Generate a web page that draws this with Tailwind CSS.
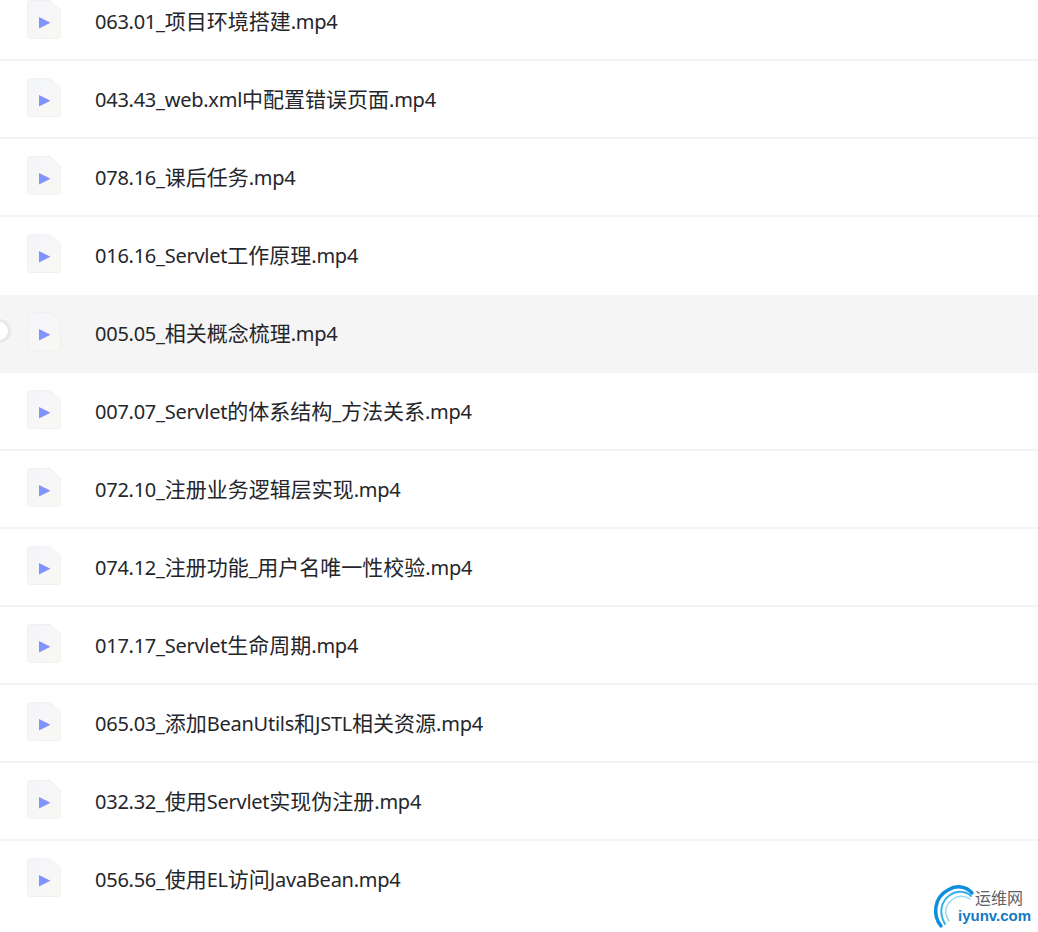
<!DOCTYPE html>
<html lang="zh"><head><meta charset="utf-8">
<script src="https://cdn.jsdelivr.net/npm/@tailwindcss/browser@4"></script>
</head>
<body class="bg-white">
<div class="relative h-[932px] w-[1038px] overflow-hidden bg-white text-[20px] tracking-[-0.25px] text-[#25262b] [font-family:'Noto_Sans','Noto_Sans_CJK_SC',sans-serif]">
<svg class="absolute h-0 w-0"><defs>
<linearGradient id="fg" x1="0" y1="0" x2="1" y2="1"><stop offset="0" stop-color="#f3f5fa"/><stop offset="1" stop-color="#faf8f3"/></linearGradient>
<symbol id="file" viewBox="0 0 34 39"><path d="M3.5 .5H23.5L33.5 10V35.5a3 3 0 0 1-3 3H3.5a3 3 0 0 1-3-3V3.5a3 3 0 0 1 3-3Z" fill="url(#fg)" stroke="#f1f1f1"/><path d="M12 17 23.5 22.8 12 28.5Z" fill="#8093ff"/></symbol>
</defs></svg>
<ul class="-mt-[17px]">
<li class="flex h-[78px] items-center border-b-2 border-[#f4f4f4] pl-[27px]"><svg class="mr-[34px] mb-[3px] h-[39px] w-[34px]"><use href="#file"/></svg><span class="pt-[2px]">063.01_<span class="text-[21px] tracking-normal">项目环境搭建</span>.mp4</span></li>
<li class="flex h-[78px] items-center border-b-2 border-[#f4f4f4] pl-[27px]"><svg class="mr-[34px] mb-[3px] h-[39px] w-[34px]"><use href="#file"/></svg><span class="pt-[2px]">043.43_web.xml<span class="text-[21px] tracking-normal">中配置错误页面</span>.mp4</span></li>
<li class="flex h-[78px] items-center border-b-2 border-[#f4f4f4] pl-[27px]"><svg class="mr-[34px] mb-[3px] h-[39px] w-[34px]"><use href="#file"/></svg><span class="pt-[2px]">078.16_<span class="text-[21px] tracking-normal">课后任务</span>.mp4</span></li>
<li class="flex h-[78px] items-center border-b-2 border-transparent pl-[27px]"><svg class="mr-[34px] mb-[3px] h-[39px] w-[34px]"><use href="#file"/></svg><span class="pt-[2px]">016.16_Servlet<span class="text-[21px] tracking-normal">工作原理</span>.mp4</span></li>
<li class="relative flex h-[78px] items-center border-b-2 border-transparent bg-[#f5f5f5] pl-[27px]"><span class="absolute -left-[13px] top-[24px] h-[24px] w-[24px] rounded-full border-[3px] border-[#e8e8e8] bg-white"></span><svg class="mr-[34px] mb-[3px] h-[39px] w-[34px]"><use href="#file"/></svg><span class="pt-[2px]">005.05_<span class="text-[21px] tracking-normal">相关概念梳理</span>.mp4</span></li>
<li class="flex h-[78px] items-center border-b-2 border-[#f4f4f4] pl-[27px]"><svg class="mr-[34px] mb-[3px] h-[39px] w-[34px]"><use href="#file"/></svg><span class="pt-[2px]">007.07_Servlet<span class="text-[21px] tracking-normal">的体系结构</span>_<span class="text-[21px] tracking-normal">方法关系</span>.mp4</span></li>
<li class="flex h-[78px] items-center border-b-2 border-[#f4f4f4] pl-[27px]"><svg class="mr-[34px] mb-[3px] h-[39px] w-[34px]"><use href="#file"/></svg><span class="pt-[2px]">072.10_<span class="text-[21px] tracking-normal">注册业务逻辑层实现</span>.mp4</span></li>
<li class="flex h-[78px] items-center border-b-2 border-[#f4f4f4] pl-[27px]"><svg class="mr-[34px] mb-[3px] h-[39px] w-[34px]"><use href="#file"/></svg><span class="pt-[2px]">074.12_<span class="text-[21px] tracking-normal">注册功能</span>_<span class="text-[21px] tracking-normal">用户名唯一性校验</span>.mp4</span></li>
<li class="flex h-[78px] items-center border-b-2 border-[#f4f4f4] pl-[27px]"><svg class="mr-[34px] mb-[3px] h-[39px] w-[34px]"><use href="#file"/></svg><span class="pt-[2px]">017.17_Servlet<span class="text-[21px] tracking-normal">生命周期</span>.mp4</span></li>
<li class="flex h-[78px] items-center border-b-2 border-[#f4f4f4] pl-[27px]"><svg class="mr-[34px] mb-[3px] h-[39px] w-[34px]"><use href="#file"/></svg><span class="pt-[2px]">065.03_<span class="text-[21px] tracking-normal">添加</span>BeanUtils<span class="text-[21px] tracking-normal">和</span>JSTL<span class="text-[21px] tracking-normal">相关资源</span>.mp4</span></li>
<li class="flex h-[78px] items-center border-b-2 border-[#f4f4f4] pl-[27px]"><svg class="mr-[34px] mb-[3px] h-[39px] w-[34px]"><use href="#file"/></svg><span class="pt-[2px]">032.32_<span class="text-[21px] tracking-normal">使用</span>Servlet<span class="text-[21px] tracking-normal">实现伪注册</span>.mp4</span></li>
<li class="flex h-[78px] items-center border-b-2 border-transparent pl-[27px]"><svg class="mr-[34px] mb-[3px] h-[39px] w-[34px]"><use href="#file"/></svg><span class="pt-[2px]">056.56_<span class="text-[21px] tracking-normal">使用</span>EL<span class="text-[21px] tracking-normal">访问</span>JavaBean.mp4</span></li>
</ul>
<div class="absolute left-[930px] top-[880px] h-[50px] w-[108px] tracking-normal">
<svg class="absolute left-0 top-0 h-[50px] w-[50px]" viewBox="0 0 50 50" fill="none"><path d="M11 46C3 36 3 18 18 10C26 5 36 6 42 13" stroke="#0e8fdc" stroke-width="3.5" stroke-linecap="round"/><path d="M15 44C9 34 10 22 20 15C27 10 36 11 41 16" stroke="#35aeea" stroke-width="2" stroke-linecap="round"/><path d="M19 41C14 33 15 25 23 19C29 15 36 16 40 19" stroke="#9ad8f4" stroke-width="1.5" stroke-linecap="round"/></svg>
<span class="absolute left-[45px] top-[7px] text-[16px] leading-[20px] text-[#5d6167] [font-family:'Noto_Sans_CJK_SC',sans-serif]">运维网</span>
<span class="absolute left-[28px] top-[26px] text-[15px] font-bold leading-[20px] text-[#1479c4] [font-family:'Liberation_Sans',sans-serif]">iyunv.com</span>
</div>
</div>
</body></html>
